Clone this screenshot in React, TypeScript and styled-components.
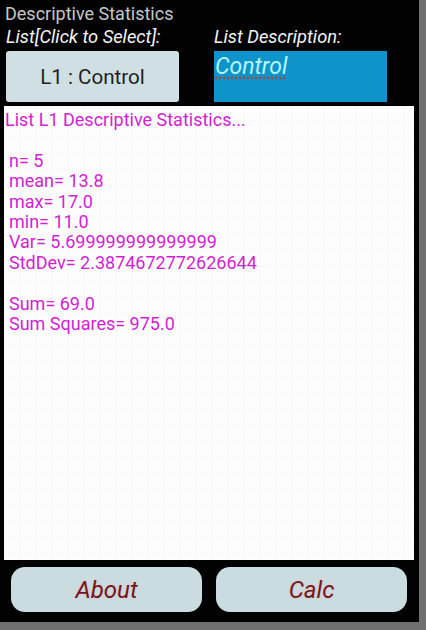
import React from "react";
import styled, { createGlobalStyle } from "styled-components";

const Global = createGlobalStyle`
  html, body { margin: 0; padding: 0; background: #6f6f6f; }
  body { font-family: Roboto, "Noto Sans", sans-serif; }
`;

const Frame = styled.div`
  width: 426px;
  height: 630px;
  background: #6f6f6f;
  display: flex;
  flex-direction: column;
`;

const Screen = styled.div`
  width: 419px;
  height: 622px;
  background: #020202;
  display: flex;
  flex-direction: column;
  box-sizing: border-box;
`;

const Title = styled.div`
  color: #c6c6c6;
  font-size: 18px;
  line-height: 20px;
  padding: 4px 0 0 5px;
  height: 23px;
  box-sizing: border-box;
`;

const Header = styled.div`
  display: grid;
  grid-template-columns: 208px 173px;
  padding-left: 6px;
`;

const Col = styled.div`
  display: flex;
  flex-direction: column;
`;

const Label = styled.div`
  color: #f4f4f4;
  font-style: italic;
  font-size: 18.3px;
  line-height: 22px;
  height: 28px;
  padding-top: 3px;
  box-sizing: border-box;
`;

const SelectButton = styled.div`
  width: 173px;
  height: 51px;
  background: #cfdfe3;
  border-radius: 3px;
  display: flex;
  align-items: center;
  justify-content: center;
  color: #1f1f1f;
  font-size: 20.6px;
`;

const DescBox = styled.div`
  width: 173px;
  height: 51px;
  background: #0d95cb;
  box-sizing: border-box;
  padding: 2px 0 0 1px;
`;

const DescText = styled.span`
  color: #b8f4ff;
  font-style: italic;
  font-size: 23px;
  line-height: 28px;
  text-decoration: underline dotted #c0392b;
  text-underline-offset: 3px;
`;

const Panel = styled.div`
  margin: 4px 0 0 4px;
  width: 410px;
  height: 454px;
  background-color: #fdfdfd;
  background-image:
    linear-gradient(to right, rgba(0,0,0,0.018) 1px, transparent 1px),
    linear-gradient(to bottom, rgba(0,0,0,0.018) 1px, transparent 1px);
  background-size: 16px 16px;
  box-sizing: border-box;
  padding: 4px 0 0 1px;
  color: #d21fd2;
  font-size: 18px;
  line-height: 20.4px;
`;

const StatLine = styled.div<{ $indent?: boolean }>`
  padding-left: ${(p) => (p.$indent ? 4 : 0)}px;
  white-space: pre;
  height: 20.4px;
`;

const Footer = styled.div`
  display: grid;
  grid-template-columns: 191px 191px;
  column-gap: 14px;
  padding: 7px 0 0 11px;
`;

const BigButton = styled.div`
  height: 45px;
  background: #cbdce1;
  border-radius: 14px;
  display: flex;
  align-items: center;
  justify-content: center;
  color: #6e1a1e;
  font-style: italic;
  font-size: 24px;
  text-shadow: 0 0 2px rgba(255, 150, 150, 0.6);
`;

const lines: { t: string; indent?: boolean }[] = [
  { t: "List L1 Descriptive Statistics..." },
  { t: "" },
  { t: "n= 5", indent: true },
  { t: "mean= 13.8", indent: true },
  { t: "max= 17.0", indent: true },
  { t: "min= 11.0", indent: true },
  { t: "Var= 5.699999999999999", indent: true },
  { t: "StdDev= 2.3874672772626644", indent: true },
  { t: "" },
  { t: "Sum= 69.0", indent: true },
  { t: "Sum Squares= 975.0", indent: true },
];

export default function App() {
  return (
    <>
      <Global />
      <Frame>
        <Screen>
          <Title>Descriptive Statistics</Title>
          <Header>
            <Col>
              <Label>List[Click to Select]:</Label>
              <SelectButton>L1 : Control</SelectButton>
            </Col>
            <Col>
              <Label>List Description:</Label>
              <DescBox>
                <DescText>Control</DescText>
              </DescBox>
            </Col>
          </Header>
          <Panel>
            {lines.map((l, i) => (
              <StatLine key={i} $indent={l.indent}>
                {l.t}
              </StatLine>
            ))}
          </Panel>
          <Footer>
            <BigButton>About</BigButton>
            <BigButton>Calc</BigButton>
          </Footer>
        </Screen>
      </Frame>
    </>
  );
}
